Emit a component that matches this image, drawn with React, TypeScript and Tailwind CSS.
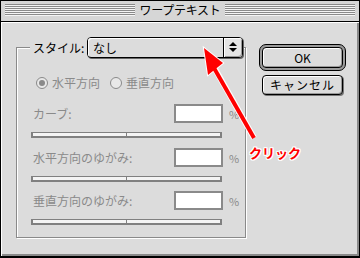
import React from "react";

const Stripes = () => (
  <div className="flex-1 h-[12px] bg-[repeating-linear-gradient(to_bottom,#8a8a8a_0px,#8a8a8a_1px,#f4f4f4_1px,#f4f4f4_2px)]" />
);

const Radio = ({ checked }: { checked?: boolean }) => (
  <div className="w-[12px] h-[12px] rounded-full border border-[#8a8a8a] bg-[#e8e8e8] flex items-center justify-center">
    {checked && <div className="w-[6px] h-[6px] rounded-full bg-[#8a8a8a]" />}
  </div>
);

const Slider = () => (
  <div className="ml-[14px] w-[191px] h-[6px] border-x-2 border-t border-b-2 border-[#808080] bg-[#f4f4f4] flex">
    <div className="flex-1 border-r border-[#808080]" />
    <div className="flex-1" />
  </div>
);

const Row = ({ label, mt }: { label: string; mt: string }) => (
  <div className={`flex items-center ml-[16px] ${mt}`}>
    <div className="w-[141px] text-[#8a8a8a]">{label}</div>
    <div className="w-[49px] h-[19px] border-2 border-[#8a8a8a] bg-white" />
    <div className="ml-[6px] text-[#8a8a8a] text-[11px]">%</div>
  </div>
);

export default function App() {
  return (
    <div className="relative w-[360px] h-[258px] border border-black border-b-2 flex flex-col bg-[#dcdcdc] font-['Noto_Sans_CJK_JP','Noto_Sans',sans-serif] text-[12px] leading-[14px] text-black overflow-hidden">
      {/* title bar */}
      <div className="h-[21px] border-b border-black bg-[#d6d6d6] flex items-start pt-[3px] px-[4px] shrink-0">
        <Stripes />
        <div className="px-[5px] leading-[12px] text-[12px] tracking-[-0.3px]">ワープテキスト</div>
        <Stripes />
      </div>

      {/* body */}
      <div className="flex-1 flex items-start pl-[15px] pt-[22px] shadow-[inset_1px_1px_0_#fff,inset_-2px_-2px_0_#8a8a8a]">
        {/* group box */}
        <div className="mt-[3px] w-[230px] h-[191px] border border-[#8a8a8a] shadow-[inset_1px_1px_0_#fff,1px_1px_0_#fff] flex flex-col">
          {/* header */}
          <div className="-mt-[11px] ml-[13px] flex items-center h-[21px]">
            <div className="w-[57px] pl-[3px] bg-[#dcdcdc] h-[14px]">スタイル:</div>
            <div className="w-[156px] h-[21px] flex border border-black rounded-[4px] bg-[#dcdcdc] shadow-[1px_1px_0_#666]">
              <div className="flex-1 pl-[5px] flex items-center rounded-l-[3px] shadow-[inset_1px_1px_0_#fff]">なし</div>
              <div className="w-[19px] border-l border-black flex items-center justify-center rounded-r-[3px] bg-[#e4e4e4] shadow-[inset_1px_1px_0_#fff,inset_-1px_-1px_0_#999]">
                <svg width="8" height="11" viewBox="0 0 8 11">
                  <path d="M4 0 L8 4 L0 4 Z" fill="#000" />
                  <path d="M0 6 L8 6 L4 10 Z" fill="#000" />
                </svg>
              </div>
            </div>
          </div>

          {/* radios */}
          <div className="mt-[18px] ml-[19px] h-[14px] flex items-center text-[#8a8a8a]">
            <Radio checked />
            <span className="ml-[4px]">水平方向</span>
            <div className="ml-[10px]"><Radio /></div>
            <span className="ml-[4px]">垂直方向</span>
          </div>

          <Row label="カーブ:" mt="mt-[14px]" />
          <div className="mt-[9px]"><Slider /></div>
          <Row label="水平方向のゆがみ:" mt="mt-[10px]" />
          <div className="mt-[9px]"><Slider /></div>
          <Row label="垂直方向のゆがみ:" mt="mt-[9px]" />
          <div className="mt-[9px]"><Slider /></div>
        </div>

        {/* buttons */}
        <div className="ml-[13px] w-[87px] flex flex-col items-center">
          <div className="w-[87px] h-[27px] border border-black rounded-[7px] p-[2px] bg-[#9a9a9a]">
            <div className="w-full h-full border border-black rounded-[4px] bg-[#dcdcdc] shadow-[inset_1px_1px_0_#fff,inset_-1px_-1px_0_#999] flex items-center justify-center">
              OK
            </div>
          </div>
          <div className="mt-[4px] w-[81px] h-[20px] border border-black rounded-[4px] bg-[#dcdcdc] shadow-[inset_1px_1px_0_#fff,inset_-1px_-1px_0_#999,1px_1px_0_#777] flex items-center justify-center tracking-[1px]">
            キャンセル
          </div>
        </div>
      </div>

      {/* annotation overlay */}
      <svg className="absolute left-0 top-0 pointer-events-none" width="360" height="258" viewBox="0 0 360 258">
        <line x1="253" y1="137" x2="214" y2="68" stroke="#fff" strokeWidth="6" />
        <polygon points="203,47 207,74 222,62" fill="#ff0000" stroke="#fff" strokeWidth="2" />
        <line x1="253" y1="137" x2="213" y2="67" stroke="#ff0000" strokeWidth="4" />
        <polygon points="203,47 207,74 222,62" fill="#ff0000" />
      </svg>
      <span className="absolute left-[248px] top-[145px] text-[13px] leading-[14px] font-bold text-[#ff0000] [text-shadow:1px_0_0_#fff,-1px_0_0_#fff,0_1px_0_#fff,0_-1px_0_#fff,1px_1px_0_#fff,-1px_-1px_0_#fff,1px_-1px_0_#fff,-1px_1px_0_#fff]">
        クリック
      </span>
    </div>
  );
}
